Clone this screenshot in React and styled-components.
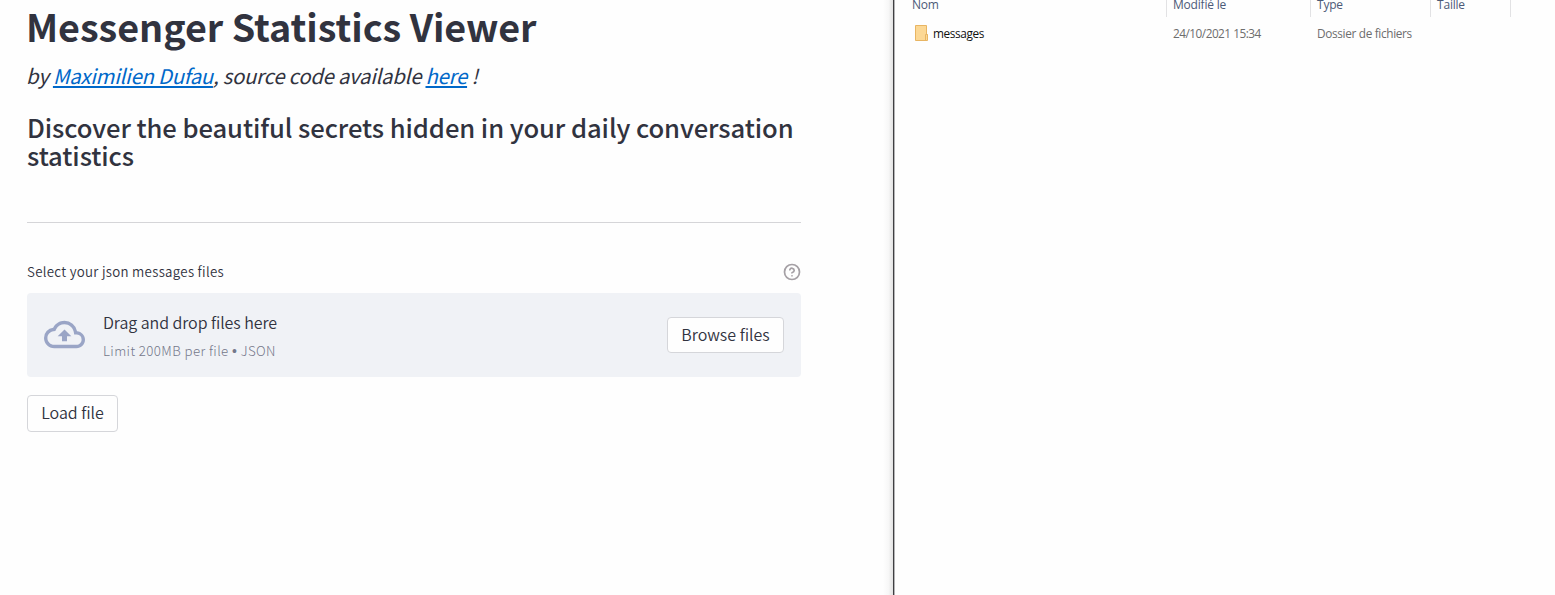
import React from "react";
import styled, { createGlobalStyle } from "styled-components";

const GlobalStyle = createGlobalStyle`
  * { box-sizing: border-box; }
  body {
    margin: 0;
    background: #fefefe;
    overflow: hidden;
  }
`;

const Screen = styled.div`
  display: flex;
  width: 100%;
  height: 100vh;
  background: #fefefe;
`;

const StatsPage = styled.main`
  flex: 0 0 883px;
  padding: 4px 82px 0 27px;
  color: #31333f;
  font-family: "Noto Sans CJK SC", "Liberation Sans", sans-serif;
`;

const Title = styled.h1`
  margin: 0 0 13px -1px;
  font-size: 37.7px;
  line-height: 44px;
  font-weight: 700;
  white-space: nowrap;
  letter-spacing: -0.04px;
`;

const Byline = styled.p`
  margin: 0 0 24px -1px;
  font-size: 20.3px;
  line-height: 28px;
  font-style: italic;
  font-weight: 400;
  letter-spacing: -0.22px;
  white-space: nowrap;
`;

const Link = styled.a`
  color: #0068c9;
  text-decoration: underline;
  text-decoration-thickness: 2px;
  text-underline-offset: 2px;
  text-decoration-skip-ink: none;
`;

const Subtitle = styled.h2`
  margin: 0 -10px 53px 0;
  font-size: 25.6px;
  line-height: 28px;
  font-weight: 500;
  letter-spacing: -0.08px;
`;

const Rule = styled.hr`
  height: 1px;
  margin: 0 0 38px;
  border: 0;
  background: #d5d5d8;
`;

const FieldHeader = styled.div`
  display: flex;
  justify-content: space-between;
  align-items: center;
  height: 20px;
  margin-bottom: 12px;
`;

const Label = styled.label`
  padding-top: 2px;
  font-size: 13.3px;
  font-weight: 350;
  line-height: 20px;
  letter-spacing: 0.29px;
`;

const HelpIcon = styled.svg`
  width: 18px;
  height: 18px;
  margin: 2px -0.4px 0 0;
  fill: none;
  stroke: #a5a0a5;
  stroke-width: 2.3;
  stroke-linecap: round;
  stroke-linejoin: round;
`;

const Dropzone = styled.section`
  display: flex;
  align-items: center;
  height: 84px;
  margin-bottom: 18px;
  padding: 0 17px;
  border-radius: 4px;
  background: #f0f2f6;
`;

const CloudIcon = styled.svg`
  width: 41px;
  height: 41px;
  margin-bottom: 1px;
  fill: #9aa5c6;
`;

const DropText = styled.div`
  flex: 1;
  margin-left: 18px;
  padding-top: 4px;
`;

const DropTitle = styled.div`
  font-size: 16px;
  line-height: 27px;
  font-weight: 350;
  letter-spacing: -0.06px;
`;

const DropHint = styled.div`
  font-size: 13.3px;
  line-height: 29px;
  font-weight: 300;
  letter-spacing: 0.4px;
  color: #74778a;
`;

const Bullet = styled.span`
  font-family: "Liberation Sans", sans-serif;
  font-size: 14px;
`;

const Button = styled.button`
  display: block;
  width: ${(p) => p.$width}px;
  height: ${(p) => p.$height}px;
  padding: 0 0 3px;
  border: 1px solid #d5d6da;
  border-radius: 4px;
  background: #fefefe;
  color: #31333f;
  font: 350 16px/24px "Noto Sans CJK SC", "Liberation Sans", sans-serif;
  white-space: nowrap;
`;

const WindowEdge = styled.div`
  flex: 0 0 12px;
  border-right: 1px solid #b4b4b6;
  background:
    linear-gradient(#3f3f42, #3f3f42) right / 1px 100% no-repeat,
    linear-gradient(90deg, #fefefe, #f7f7f7 50%, #dedede);
`;

const Explorer = styled.aside`
  flex: 1;
  font-family: "Open Sans", "Noto Sans", sans-serif;
  font-size: 12px;
`;

const Columns = styled.div`
  display: grid;
  grid-template-columns: 272px 144px 120px 80px;
`;

const HeaderCell = styled.div`
  height: 17px;
  padding-left: ${(p) => (p.$first ? 17 : 6)}px;
  border-right: 1px solid #e2e2e4;
  color: #4c5a78;
  line-height: 9px;
  letter-spacing: -0.2px;
`;

const FileRow = styled(Columns)`
  height: 24px;
  margin-top: 4px;
`;

const FileName = styled.div`
  display: flex;
  align-items: center;
  height: 24px;
  gap: 5px;
  padding-left: 20px;
  color: #111;
  font-size: 11.8px;
  line-height: 26px;
  letter-spacing: -0.38px;
`;

const FileInfo = styled.div`
  height: 24px;
  padding-left: 6px;
  color: #6d6d6d;
  font-size: 11.8px;
  line-height: 24px;
  letter-spacing: ${(p) => p.$tracking}px;
`;

const FolderIcon = styled.svg`
  width: 13px;
  height: 16px;
`;

export default function App() {
  return (
    <Screen>
      <GlobalStyle />
      <StatsPage>
        <Title>Messenger Statistics Viewer</Title>
        <Byline>
          by <Link>Maximilien Dufau</Link>, source code available <Link>here</Link> !
        </Byline>
        <Subtitle>
          Discover the beautiful secrets hidden in your daily conversation statistics
        </Subtitle>
        <Rule />
        <FieldHeader>
          <Label>Select your json messages files</Label>
          <HelpIcon viewBox="0 0 24 24">
            <circle cx="12" cy="12" r="10" />
            <path d="M9.09 9a3 3 0 0 1 5.83 1c0 2-3 3-3 3" />
            <path d="M12 17h.01" />
          </HelpIcon>
        </FieldHeader>
        <Dropzone>
          <CloudIcon viewBox="0 0 24 24">
            <path d="M19.35 10.04A7.49 7.49 0 0 0 12 4C9.11 4 6.6 5.64 5.35 8.04A5.994 5.994 0 0 0 0 14c0 3.31 2.69 6 6 6h13c2.76 0 5-2.24 5-5 0-2.64-2.05-4.78-4.65-4.96zM19 18H6c-2.21 0-4-1.79-4-4 0-2.05 1.53-3.76 3.56-3.97l1.07-.11.5-.95A5.469 5.469 0 0 1 12 6c2.62 0 4.88 1.86 5.39 4.43l.3 1.5 1.53.11A2.98 2.98 0 0 1 22 15c0 1.65-1.35 3-3 3zM8 13h2.55v3h2.9v-3H16l-4-4z" />
          </CloudIcon>
          <DropText>
            <DropTitle>Drag and drop files here</DropTitle>
            <DropHint>
              Limit 200MB per file <Bullet>•</Bullet> JSON
            </DropHint>
          </DropText>
          <Button $width={117} $height={36}>Browse files</Button>
        </Dropzone>
        <Button $width={91} $height={37}>Load file</Button>
      </StatsPage>
      <WindowEdge />
      <Explorer>
        <Columns>
          <HeaderCell $first>Nom</HeaderCell>
          <HeaderCell>Modifié le</HeaderCell>
          <HeaderCell>Type</HeaderCell>
          <HeaderCell>Taille</HeaderCell>
        </Columns>
        <FileRow>
          <FileName>
            <FolderIcon viewBox="0 0 13 16">
              <path d="M.5.5h11v9h1v6H.5z" fill="#fcd895" stroke="#e8b563" />
              <path d="M10.5 15V9.500h2" fill="none" stroke="#e8b563" />
            </FolderIcon>
            messages
          </FileName>
          <FileInfo $tracking={-0.5}>24/10/2021 15:34</FileInfo>
          <FileInfo $tracking={-0.33}>Dossier de fichiers</FileInfo>
        </FileRow>
      </Explorer>
    </Screen>
  );
}
